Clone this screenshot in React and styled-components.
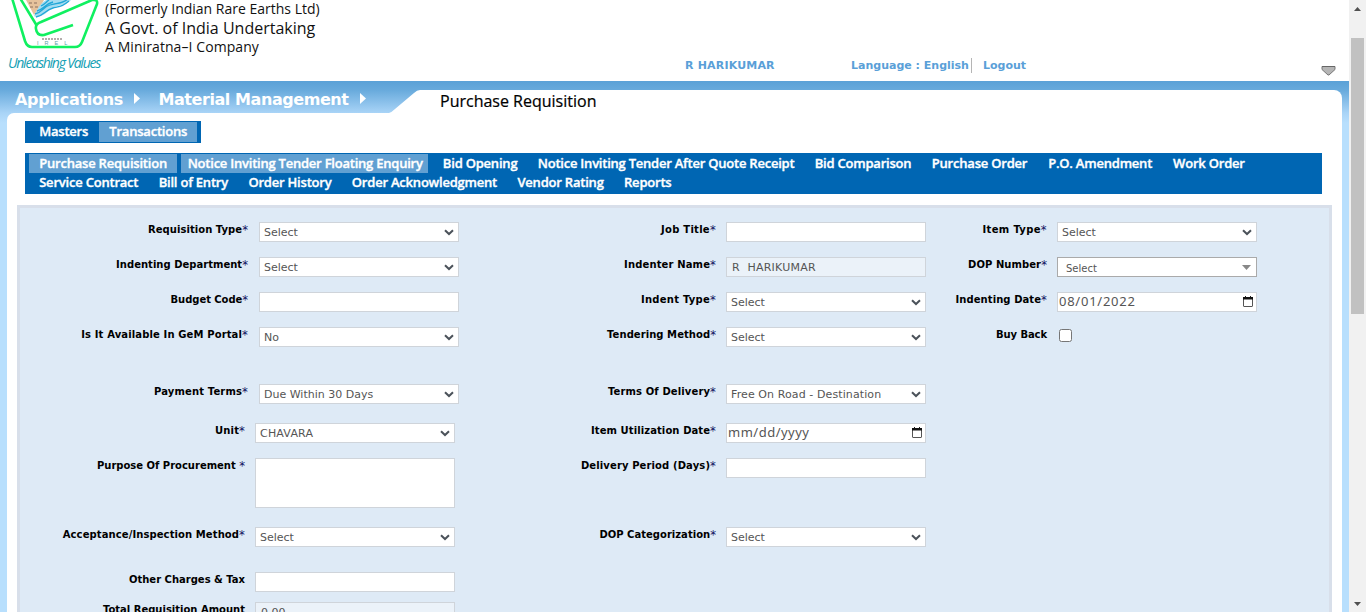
import React from 'react';
import styled, { createGlobalStyle } from 'styled-components';

const verdana = 'Verdana, "DejaVu Sans", sans-serif';
const openSans = '"Open Sans", "Noto Sans", sans-serif';

const GlobalStyle = createGlobalStyle`
  * { box-sizing: border-box; }
  body { margin: 0; background: #fff; font-family: ${verdana}; overflow: hidden; }
`;

const Window = styled.div`
  display: flex;
  width: 1366px;
  height: 612px;
  overflow: hidden;
`;

const Page = styled.div`
  display: flex;
  flex-direction: column;
  width: 1349px;
  height: 612px;
  overflow: hidden;
`;

const Header = styled.header`
  display: flex;
  flex: none;
  height: 81px;
`;

const Brand = styled.div`
  display: flex;
  flex-direction: column;
  width: 105px;
`;

const Motto = styled.div`
  padding-left: 8px;
  font: italic 400 14px/21px ${openSans};
  letter-spacing: -1.22px;
  color: #14a0b4;
  white-space: nowrap;
`;

const Company = styled.div`
  display: flex;
  flex-direction: column;
  width: 580px;
  color: #111;
  font-family: ${openSans};
  white-space: nowrap;
`;

const CompanyLine = styled.span`
  height: ${(p) => p.$height}px;
  font-size: ${(p) => p.$size}px;
  line-height: ${(p) => p.$line}px;
  letter-spacing: ${(p) => p.$track || 0}px;
`;

const UserLinks = styled.nav`
  display: flex;
  flex: 1;
  align-items: flex-start;
  padding-top: 58px;
  font: bold 11px/15px ${verdana};
  color: #5a9fd8;
  white-space: nowrap;
`;

const UserName = styled.span`
  width: 166px;
  letter-spacing: 0.18px;
`;

const Language = styled.span`
  width: 121px;
  border-right: 1px solid #b5b5b5;
`;

const Logout = styled.span`
  flex: 1;
  padding-left: 11px;
`;

const CollapseIcon = styled.svg`
  margin: 7px 13px 0 0;
`;

const Frame = styled.main`
  flex: 1;
  min-height: 0;
  padding: 9px 7px 0;
  background: linear-gradient(#5aa1d7 0, #68aadc 9px, #a9d4f7 32px, #b8dffd 42px);
`;

const TopRow = styled.div`
  display: flex;
  height: 23px;
`;

const Crumbs = styled.div`
  display: flex;
  align-items: center;
  width: 382px;
  height: 20px;
  padding-left: 8px;
  font: bold 16px/20px ${verdana};
  color: #fff;
  white-space: nowrap;
`;

const Crumb = styled.span`
  letter-spacing: ${(p) => p.$track}px;
`;

const CrumbArrow = styled.svg`
  margin: 0 18.5px 3px 11px;
`;

const Title = styled.h1`
  flex: 1;
  margin: 0;
  padding-left: 20px;
  border-top-right-radius: 8px;
  background: #fff;
  font: 400 16px/23px ${openSans};
  color: #000;
  -webkit-text-stroke: 0.2px #000;
`;

const Sheet = styled.div`
  height: 600px;
  padding: 8px 10px 0;
  border-top-left-radius: 7px;
  background: #fff;
`;

const MenuItem = styled.span`
  height: 19px;
  padding: 0 ${(p) => p.$right ?? 10.2}px 0 ${(p) => p.$left ?? 10.2}px;
  margin-right: ${(p) => p.$gap || 0}px;
  background: ${(p) => (p.$active ? '#61a0d2' : 'transparent')};
  font: 600 13px/19px ${openSans};
  letter-spacing: ${(p) => p.$track ?? -0.21}px;
  color: #fff;
  -webkit-text-stroke: 0.35px #fff;
  white-space: nowrap;
`;

const Tabs = styled.div`
  display: flex;
  width: 176px;
  height: 22px;
  margin-left: 8px;
  padding: 1px 4px;
  background: #0066b3;
`;

const Tab = styled(MenuItem)`
  height: 20px;
`;

const Menu = styled.div`
  width: 1297px;
  height: 41px;
  margin: 10px 0 11px 8px;
  padding: 1px 4px;
  background: #0066b3;
`;

const MenuRow = styled.div`
  display: flex;
  height: 19px;
`;

const Form = styled.form`
  display: flex;
  flex-direction: column;
  width: 1315px;
  height: 520px;
  padding-top: 14px;
  border: 3px solid #d8dfea;
  background: #deeaf6;
`;

const Row = styled.div`
  display: flex;
  flex: none;
  height: ${(p) => p.$height || 20}px;
  margin-bottom: ${(p) => p.$after}px;
`;

const Label = styled.label`
  width: ${(p) => p.$width}px;
  margin-right: ${(p) => p.$gap || 10}px;
  font: bold 10px/16px ${verdana};
  letter-spacing: ${(p) => p.$track}px;
  color: #000;
  text-align: right;
  white-space: nowrap;
`;

const Star = styled.span`
  font-size: 11.6px;
  font-weight: 400;
  line-height: 10px;
  vertical-align: -1px;
  color: #101060;
`;

const Control = styled.div`
  display: flex;
  align-items: center;
  justify-content: space-between;
  width: 200px;
  height: ${(p) => p.$height || 20}px;
  padding: 0 4px;
  border: 1px solid ${(p) => (p.$dark ? '#aaa' : '#cfd4da')};
  background: ${(p) => (p.$disabled ? '#ebf2f9' : '#fff')};
  font: 11px/18px ${verdana};
  color: #555;
  white-space: pre;
`;

const Value = styled.span`
  padding: ${(p) => p.$top || 1}px 0 0 ${(p) => p.$left || 0}px;
  font-size: ${(p) => p.$size || 11}px;
  line-height: 17px;
  letter-spacing: ${(p) => p.$track || 0}px;
`;

const DateText = styled.span`
  margin: 0 0 2px -3px;
  font: 13px/16px "Noto Sans", sans-serif;
  letter-spacing: ${(p) => p.$track || 0.5}px;
`;

const CalendarIcon = styled.svg`
  margin: 0 -1px 1px 0;
`;

const Checkbox = styled.span`
  width: 13px;
  height: 13px;
  margin: 2px 0 0 2px;
  border: 1px solid #767676;
  border-radius: 2.5px;
  background: #fff;
`;

const Scrollbar = styled.aside`
  display: flex;
  flex-direction: column;
  align-items: center;
  justify-content: space-between;
  width: 17px;
  height: 612px;
  padding: 7px 0 6px;
  background: #f1f1f1;
`;

const Thumb = styled.div`
  width: 13px;
  height: 276px;
  margin: 27px 0 auto;
  background: #c1c1c1;
`;

const Chevron = () => (
  <svg width="10" height="7" viewBox="0 0 10 7">
    <path d="M1 1.2 5 5 9 1.2" fill="none" stroke="#4b525a" strokeWidth="2" />
  </svg>
);

const Calendar = () => (
  <CalendarIcon width="10" height="11" viewBox="0 0 10 11">
    <path d="M2.500 0v2M7.500 0v2" stroke="#222" strokeWidth="1" />
    <rect x="0.5" y="1.5" width="9" height="9" rx="0.5" fill="none" stroke="#555" />
    <path d="M0 1h10v2.500H0z" fill="#111" />
  </CalendarIcon>
);

const Arrow = ({ up }) => (
  <svg width="7" height="4" viewBox="0 0 7 4">
    <path d={up ? 'M0 4 3.5 0 7 4z' : 'M0 0h7L3.5 4z'} fill="#505050" />
  </svg>
);

const Logo = () => (
  <svg width="105" height="52" viewBox="0 0 105 52" fill="none">
    <path d="M26 0h18l-5 9-5 6z" fill="#e6c29c" />
    <path d="M29 3h3m2 0h3m-7 4h3m2 0h3" stroke="#8c7060" />
    <path d="M34 16C38 8 40 3 48-1H72C66 6 60 4 53 8s-8 8-17 9z" fill="#a5dcf0" />
    <path d="M35 14c7-1 8-7 15-9s12-1 18-6M36 17c8-1 9-7 17-9s10-2 16-7M37 11c6-1 8-7 16-9M41 6c4-2 5-4 8-6" stroke="#22a7d8" strokeWidth="1.3" />
    <path d="M12-2 25 41q2 6 7 6h43q5 0 7-5L97 4q1-5-5-4L41 22q-6 2-5 7 1 7 8 6L73 25M20-2 37 26" stroke="#10f060" strokeWidth="2.6" strokeLinejoin="round" />
    <path d="M42 39h20" stroke="#b5adad" strokeWidth="2" strokeDasharray="2 1" />
    <text x="37" y="45" fill="#59a3a8" fontSize="5.5" letterSpacing="6" fontFamily="Liberation Sans">IREL</text>
  </svg>
);

const Field = ({ label, star, width, gap, track, children }) => (
  <>
    <Label $width={width} $gap={gap} $track={track}>{label}{star !== false && <Star>*</Star>}</Label>
    {children}
  </>
);

const Select = ({ children, track }) => <Control><Value $track={track}>{children}</Value><Chevron /></Control>;

const CrumbMark = () => (
  <CrumbArrow width="6" height="11" viewBox="0 0 6 11"><path d="M0 0 6 5.5 0 11z" fill="#fff" /></CrumbArrow>
);

export default function App() {
  return (
    <Window>
      <GlobalStyle />
      <Page>
        <Header>
          <Brand><Logo /><Motto>Unleashing Values</Motto></Brand>
          <Company>
            <CompanyLine $size={14} $height={19} $line={18}>(Formerly Indian Rare Earths Ltd)</CompanyLine>
            <CompanyLine $size={16} $height={18} $line={19}>A Govt. of India Undertaking</CompanyLine>
            <CompanyLine $size={14} $height={19} $line={19} $track={0.08}>A Miniratna–I Company</CompanyLine>
          </Company>
          <UserLinks>
            <UserName>R HARIKUMAR</UserName>
            <Language>Language : English</Language>
            <Logout>Logout</Logout>
            <CollapseIcon width="15" height="11" viewBox="0 0 15 11">
              <path d="M1 1.500h13v3L8 10H7L1 4.500z" fill="#b5b5b5" stroke="#777" />
              <path d="M1 1.500h13" stroke="#666" />
            </CollapseIcon>
          </UserLinks>
        </Header>
        <Frame>
          <TopRow>
            <Crumbs>
              <Crumb $track={-0.3}>Applications</Crumb><CrumbMark />
              <Crumb $track={-0.43}>Material Management</Crumb><CrumbMark />
            </Crumbs>
            <svg width="31" height="23" viewBox="0 0 31 23"><path d="M0 23Q3 22 6 19L25 3Q28 0 31 0V23z" fill="#fff" /></svg>
            <Title>Purchase Requisition</Title>
          </TopRow>
          <Sheet>
            <Tabs><Tab $right={11}>Masters</Tab><Tab $active>Transactions</Tab></Tabs>
            <Menu>
              <MenuRow>
                <MenuItem $active $gap={4}>Purchase Requisition</MenuItem>
                <MenuItem $active $gap={4.5} $left={6.5} $right={5.5} $track={-0.23}>Notice Inviting Tender Floating Enquiry</MenuItem>
                <MenuItem>Bid Opening</MenuItem>
                <MenuItem $track={-0.23}>Notice Inviting Tender After Quote Receipt</MenuItem>
                <MenuItem>Bid Comparison</MenuItem>
                <MenuItem $right={10.8}>Purchase Order</MenuItem>
                <MenuItem $right={10.8}>P.O. Amendment</MenuItem>
                <MenuItem>Work Order</MenuItem>
              </MenuRow>
              <MenuRow>
                <MenuItem>Service Contract</MenuItem>
                <MenuItem>Bill of Entry</MenuItem>
                <MenuItem>Order History</MenuItem>
                <MenuItem>Order Acknowledgment</MenuItem>
                <MenuItem>Vendor Rating</MenuItem>
                <MenuItem>Reports</MenuItem>
              </MenuRow>
            </Menu>
            <Form>
              <Row $after={15}>
                <Field label="Requisition Type" width={228} gap={11} track={0.05}><Select>Select</Select></Field>
                <Field label="Job Title" width={257} track={0.27}><Control /></Field>
                <Field label="Item Type" width={121} track={0.34}><Select>Select</Select></Field>
              </Row>
              <Row $after={15}>
                <Field label="Indenting Department" width={228} gap={11} track={0.02}><Select>Select</Select></Field>
                <Field label="Indenter Name" width={257} track={0.14}>
                  <Control $disabled><Value $left={1} $track={0.25}>R  HARIKUMAR</Value></Control>
                </Field>
                <Field label="DOP Number" width={121} track={0.07}>
                  <Control $dark>
                    <Value $left={4} $top={3} $size={10}>Select</Value>
                    <svg width="10" height="5" viewBox="0 0 10 5"><path d="M0 0h9L4.500 5z" fill="#888" /></svg>
                  </Control>
                </Field>
              </Row>
              <Row $after={15}>
                <Field label="Budget Code" width={228} gap={11} track={-0.05}><Control /></Field>
                <Field label="Indent Type" width={257} track={0.24}><Select>Select</Select></Field>
                <Field label="Indenting Date" width={121} track={0.08}><Control><DateText $track={0.75}>08/01/2022</DateText><Calendar /></Control></Field>
              </Row>
              <Row $after={37}>
                <Field label="Is It Available In GeM Portal" width={228} gap={11} track={0.13}><Select>No</Select></Field>
                <Field label="Tendering Method" width={257} track={0.06}><Select>Select</Select></Field>
                <Field label="Buy Back" star={false} width={121} track={-0.09}><Checkbox /></Field>
              </Row>
              <Row $after={19}>
                <Field label="Payment Terms" width={228} gap={11} track={0.14}><Select>Due Within 30 Days</Select></Field>
                <Field label="Terms Of Delivery" width={257} track={0.12}><Select track={0.1}>Free On Road - Destination</Select></Field>
              </Row>
              <Row $after={15}>
                <Field label="Unit" width={225} track={0.14}><Select track={0.2}>CHAVARA</Select></Field>
                <Field label="Item Utilization Date" width={261} track={0.09}><Control><DateText>mm/dd/yyyy</DateText><Calendar /></Control></Field>
              </Row>
              <Row $after={19} $height={50}>
                <Field label="Purpose Of Procurement " width={225} track={-0.01}><Control $height={50} /></Field>
                <Field label="Delivery Period (Days)" width={261} track={0.12}><Control /></Field>
              </Row>
              <Row $after={25}>
                <Field label="Acceptance/Inspection Method" width={225} track={0.1}><Select>Select</Select></Field>
                <Field label="DOP Categorization" width={261} track={0.02}><Select>Select</Select></Field>
              </Row>
              <Row $after={10}>
                <Field label="Other Charges & Tax" star={false} width={225} track={0}><Control /></Field>
              </Row>
              <Row $after={0}>
                <Field label="Total Requisition Amount" star={false} width={225} track={0}><Control $disabled><Value $left={1}>0.00</Value></Control></Field>
              </Row>
            </Form>
          </Sheet>
        </Frame>
      </Page>
      <Scrollbar><Arrow up /><Thumb /><Arrow /></Scrollbar>
    </Window>
  );
}
